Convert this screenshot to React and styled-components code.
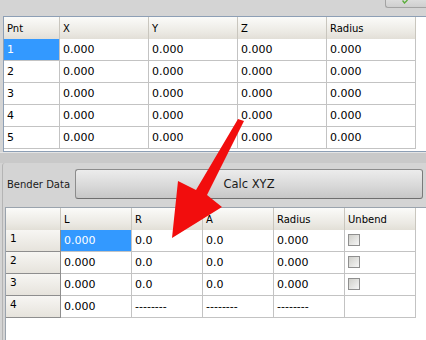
import React from 'react'
import styled, { createGlobalStyle } from 'styled-components'

const Global = createGlobalStyle`
  html, body { margin: 0; padding: 0; background: #d4d4d4; }
`

const Root = styled.div`
  position: relative;
  width: 426px;
  height: 340px;
  overflow: hidden;
  background: #d4d4d4;
  font-family: "DejaVu Sans", Verdana, sans-serif;
`

const TopStrip = styled.div`
  height: 16px;
  display: flex;
  justify-content: flex-end;
  align-items: flex-start;
`

const TopButton = styled.div`
  width: 41px;
  height: 8px;
  box-sizing: border-box;
  border-left: 1px solid #a3a3a3;
  border-bottom: 1px solid #a3a3a3;
  border-bottom-left-radius: 3px;
  background: linear-gradient(#dcdcdc, #cfcfcf);
  display: flex;
  justify-content: center;
  padding-right: 2px;
`

const Frame = styled.div`
  margin-left: ${p => p.$left}px;
  width: 460px;
  height: ${p => p.$height}px;
  box-sizing: border-box;
  border: 1px solid ${p => p.$border || '#8d9fb5'};
  background: #fff;
  display: grid;
  grid-template-columns: ${p => p.$cols};
  grid-auto-rows: 22px;
  align-content: start;
`

const Head = styled.div`
  height: 23px;
  box-sizing: border-box;
  padding: 0 3px;
  display: flex;
  align-items: center;
  font-size: 10px;
  color: #000;
  background: linear-gradient(#fbfbf9, #ebe9e3 70%, #e2dfd7);
  border-right: 1px solid #c9c6be;
  border-bottom: 1px solid #a8a59d;
`

const Cell = styled.div`
  box-sizing: border-box;
  padding: 0 3px;
  display: flex;
  align-items: center;
  font-size: 11px;
  color: ${p => (p.$selected ? '#fff' : '#000')};
  background: ${p => (p.$selected ? '#3399ff' : '#fff')};
  border-right: 1px solid #c3c3c3;
  border-bottom: 1px solid #c3c3c3;
`

const RowHead = styled.div`
  box-sizing: border-box;
  padding: 2px 4px 0;
  display: flex;
  align-items: flex-start;
  font-size: 10.5px;
  color: #000;
  background: linear-gradient(#f7f6f3, #e6e3dc);
  border-right: 1px solid #8e8e8e;
  border-bottom: 1px solid #8e8e8e;
`

const Splitter = styled.div`
  height: 11px;
  background: #c9c9c9;
  border-top: 1px solid #e4e4e4;
  box-sizing: border-box;
`

const Panel = styled.div`
  margin-left: 2px;
  background: #d4d4d4;
  border-left: 1px solid #b4b4b4;
  border-top-left-radius: 3px;
  display: flex;
  flex-direction: column;
`

const ActionRow = styled.div`
  display: flex;
  align-items: center;
  padding: 6px 3px 0 4px;
  height: 30px;
`

const Label = styled.span`
  width: 68px;
  flex-shrink: 0;
  font-size: 10px;
  color: #1a1a1a;
`

const CalcButton = styled.button`
  width: 348px;
  height: 30px;
  box-sizing: border-box;
  border: 1px solid #8c8c8c;
  border-bottom-color: #6f6f6f;
  border-right-color: #7a7a7a;
  border-radius: 3px;
  background: linear-gradient(#ececec, #d9d9d9 55%, #c7c7c7);
  font-family: "DejaVu Sans", Verdana, sans-serif;
  font-size: 11.5px;
  color: #1a1a1a;
  padding: 0;
`

const BottomWrap = styled.div`
  margin-top: 8px;
`

const Check = styled.span`
  width: 12px;
  height: 12px;
  box-sizing: border-box;
  border: 1px solid #8f8f8f;
  background: linear-gradient(135deg, #cfcfca, #f6f6f6);
`

const CheckCell = styled(Cell)`
  align-items: flex-start;
  padding-top: 4px;
`

const Overlay = styled.svg`
  position: absolute;
  left: 0;
  top: 0;
  pointer-events: none;
`

const topHeads = ['Pnt', 'X', 'Y', 'Z', 'Radius']
const bottomHeads = ['', 'L', 'R', 'A', 'Radius', 'Unbend']

const bottomRows = [
  ['0.000', '0.0', '0.0', '0.000', true],
  ['0.000', '0.0', '0.0', '0.000', true],
  ['0.000', '0.0', '0.0', '0.000', true],
  ['0.000', '--------', '--------', '--------', false],
]

export default function App() {
  return (
    <Root>
      <Global />
      <TopStrip>
        <TopButton>
          <svg width="6" height="4" viewBox="0 0 6 4">
            <path d="M0.5 0.5 L2.5 3 L5.5 0" stroke="#5cae3c" strokeWidth="1.4" fill="none" />
          </svg>
        </TopButton>
      </TopStrip>

      <Frame $left={3} $height={136} $cols="56px 89px 89px 89px 89px">
        {topHeads.map(h => <Head key={h}>{h}</Head>)}
        {[1, 2, 3, 4, 5].map(n => (
          <React.Fragment key={n}>
            <Cell $selected={n === 1}>{n}</Cell>
            <Cell>0.000</Cell>
            <Cell>0.000</Cell>
            <Cell>0.000</Cell>
            <Cell>0.000</Cell>
          </React.Fragment>
        ))}
      </Frame>

      <Splitter />

      <Panel>
        <ActionRow>
          <Label>Bender Data</Label>
          <CalcButton>Calc XYZ</CalcButton>
        </ActionRow>
        <BottomWrap>
          <Frame $left={2} $height={140} $border="#9aa3ad" $cols="55px 71px 71px 71px 71px 71px">
            {bottomHeads.map((h, i) => <Head key={i}>{h}</Head>)}
            {bottomRows.map((r, i) => (
              <React.Fragment key={i}>
                <RowHead>{i + 1}</RowHead>
                <Cell $selected={i === 0}>{r[0]}</Cell>
                <Cell>{r[1]}</Cell>
                <Cell>{r[2]}</Cell>
                <Cell>{r[3]}</Cell>
                {r[4] ? <CheckCell><Check /></CheckCell> : <Cell />}
              </React.Fragment>
            ))}
          </Frame>
        </BottomWrap>
      </Panel>

      <Overlay width="426" height="340" viewBox="0 0 426 340">
        <polygon
          points="238,119 244,121 207,195 222,207 172,238 178,181 196,190"
          fill="#f20d0d"
        />
      </Overlay>
    </Root>
  )
}
